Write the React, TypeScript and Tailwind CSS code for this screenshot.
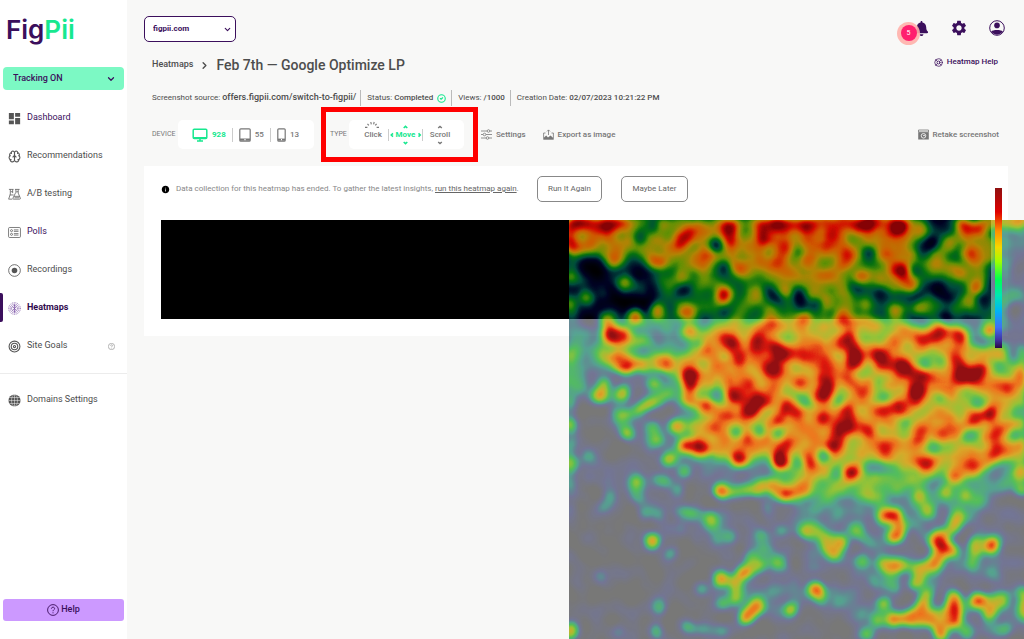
import type { ReactNode } from "react";
import { FaBell } from "react-icons/fa";
import { MdDashboard, MdSettings, MdInfo } from "react-icons/md";
import { LuBrain, LuTarget, LuLifeBuoy, LuCircleCheck, LuChevronDown, LuChevronRight } from "react-icons/lu";

type Layer = { level: number; width: number; d: string; fill?: boolean };

// movement density, painted from cold to hot and coloured by the filter in HeatCanvas
const layers: Layer[] = [
    { level: 0.09, width: 24, d: "M20 170H100M60 200L150 250 210 260M70 270L100 300 150 300 190 320M230 300L300 310 340 290 440 290M240 340L300 350 340 340M380 350L450 350M230 380L300 375M290 400L450 395M150 380L220 370M210 330L215 410M300 270L310 320M20 250L50 260M420 300L425 340" },
    { level: 0.23, width: 6, fill: true, d: "M0 0H455V262L400 285 330 292 230 290 205 255 110 240 112 205 100 150 60 148 30 152 10 170 0 180Z" },
    { level: 0.24, width: 9, d: "M2 60V290M45 190L56 213M65 262L70 280M82 208L80 230M85 258L98 262M130 290L141 301 146 320M113 295V310M199 285L201 300M170 270L190 270M200 330L215 345M165 360L190 380M190 375L215 370M380 310L395 285M315 270L300 260M290 315L310 330 325 365M340 300L360 320M400 330L405 345M305 370L330 360M395 300L410 275M420 350L432 355M400 385L455 370M385 410L440 408M290 400L300 385M265 300L275 290M370 350L360 372M340 240L350 265M130 410L150 411" },
    { level: 0.36, width: 6, fill: true, d: "M78 58L130 55 225 65 225 95 150 98 90 60ZM345 40L410 50 410 90 345 90Z" },
    { level: 0.44, width: 6, fill: true, d: "M227 245L400 245 345 262 305 280 250 270 227 282Z" },
    { level: 0.56, width: 6, fill: true, d: "M0 0H352L338 40 350 60 330 70 300 55 280 62 255 95 235 80 215 70 190 55 170 45 130 50 85 42 55 42 45 44 30 34 0 28Z" },
    { level: 0.6, width: 6, fill: true, d: "M130 112L160 105 230 104 300 100 345 108 395 112 420 125 455 130V238L420 242 395 260 345 245 305 255 270 246 250 262 232 262 222 232 150 236 125 215 135 190 118 180 122 125Z" },
    { level: 0.54, width: 15, d: "M365 40L385 20M395 5L410 60M418 0H455M418 20L420 35M60 140L100 144M58 120L75 125M30 130L50 145M190 150L150 180M370 50L400 55M380 245L395 265M145 165L150 100M195 265H225M228 270H240M110 60L115 90M180 60L200 90M280 88L270 70" },
    { level: 0.06, width: 8, fill: true, d: "M12 42L30 38 38 48 52 48 72 40 82 65 80 94 12 96 6 70Z" },
    { level: 0.2, width: 11, d: "M20 45L12 60M40 90L45 98M60 62L75 75M18 95V130M45 60L55 70M30 62L34 72M45 48L70 42" },
    { level: 0.03, width: 14, d: "M20 52L30 54M55 85H72M22 154h0M28 192L35 198M20 102h0M447 33L448 60M448 88L444 135M230 75L232 80M247 84h0M362 22h0M368 70L380 78M412 78h0M147 26h0M376 97h0" },
    { level: 0.12, width: 13, d: "M156 47h0M110 74L118 66M155 94h0M105 114h0M75 130h0M232 29h0M300 33h0M285 66h0M310 75h0M345 50h0M362 3h0M345 80L355 70M440 118h0M198 70L210 78M135 253L200 252M395 118L415 122M356 145h0M376 145h0M244 181h0M232 182h0M305 163h0M338 177h0M255 236h0M147 175h0M168 212h0M190 211h0M85 5h0M70 18h0" },
    { level: 0.2, width: 12, d: "M371 178h0M406 182L410 185M337 202h0M401 215L395 222M365 228h0M300 248H325M268 253h0M450 190L447 195M447 215h0M209 178h0M210 213h0M431 146h0M125 145h0M158 140h0M230 243h0M315 177h0M130 125h0M270 182h0M45 130h0M85 178h0" },
    { level: 0.38, width: 12, d: "M8 167h0M42 277L36 286M75 295h0M70 277h0M95 259h0M110 271h0M113 293L125 294M213 310h0M192 314h0M154 383h0M118 407h0M50 411h0M152 411h0M327 367h0M435 410h0M412 280h0M397 268h0M260 278h0M18 235h0M133 175h0M90 296h0M101 334h0M30 358h0M88 383L90 388M133 370h0M147 320h0M161 318h0M303 361h0M270 383h0M208 343L195 330M0 130V180" },
    { level: 0.6, width: 13, d: "M0 58h0M0 85h0M55 62h0M18 77h0M36 165L30 176M86 163h0M56 196h0M58 213h0M82 208h0M87 219h0M125 208h0M115 250h0M69 261h0M141 299L142 303M182 337L190 345M208 342h0M165 362L168 377M222 390h0M87 411h0M287 309h0M255 318L264 335M349 276h0M360 290h0M378 272h0M383 310L390 295M350 360L345 363M250 378h0M405 345h0M407 322V332M292 340h0M315 384h0M308 399h0M358 375L352 388M415 380L435 380M423 388L420 395M455 375V395M397 412h0M297 414h0M1 205h0M452 270h0M395 275h0M38 100h0M115 58h0M186 70h0M130 40L110 45M399 80h0M350 4L352 10M380 25h0M295 85h0M266 72L272 90" },
    { level: 0.58, width: 10, d: "M68 190L100 174M160 271H190M192 345L174 352M316 345L340 347M370 340L350 352" },
    { level: 0.74, width: 15, d: "M53 174h0M31 176h0M2 244h0M108 207h0M143 208h0M100 240h0M83 321h0M174 353h0M168 376h0M189 385L178 397M243 311L238 312M262 323H271M326 316L330 308M384 330h0M371 335L363 347 350 352M316 345L330 344M325 398h0M340 398L373 397M373 400L372 413M452 254h0M235 269h0M400 247h0M245 310h0M315 296h0M25 18h0M45 40L36 15M88 41h0M97 5h0M130 31L142 38M170 48L172 28 163 15M210 38L216 68M75 144L97 143M66 97h0M89 92h0M120 112h0M330 15L340 32M240 42L253 53M278 42h0M292 57h0M274 25L278 45M318 35L342 65M407 66h0M353 88h0M410 36L399 34M257 3L260 15M325 92h0M420 110h0M115 142L120 160M140 140L150 150M205 20L218 30M230 20L255 18 262 30M240 30L235 22" },
    { level: 0.74, width: 14, d: "M222 15L270 12M190 8L225 15M120 18L100 25M235 160L260 190 290 200 320 190 350 170M265 225L250 200 220 215M340 225L310 230M160 160L200 165 225 185M180 190V220M200 225L230 230M395 230L450 228M360 165L395 158 440 165M280 130L260 120 240 140M195 120L230 140M383 205L400 200M320 120L340 140M386 112L350 118M160 225H230M150 130L120 140M300 160L290 180M430 210L400 235M140 155L170 140M210 150L235 130M300 130L310 150M375 150L400 135" },
    { level: 0.84, width: 15, d: "M121 178h0M138 188h0M152 271h0M152 359h0M161 225h0M197 223h0M213 225h0M235 100h0M272 100h0M355 120L370 110M388 140h0M232 166h0M352 212h0M376 167h0M375 215h0M340 225L352 224M240 235L243 243M387 255h0M385 378L384 400M326 398h0M263 330h0M2 411h0M286 249L280 252M395 6V14M411 8h0M399 34h0M448 3h0M210 40h0M57 144L50 138M180 218h0M209 199h0M280 190L270 205M314 225h0M227 223h0M368 193h0M383 205h0M246 120L240 125M351 397h0" },
    { level: 0.95, width: 15, d: "M8 3H50M2 5V26M113 21L120 16M160 6L163 20M195 5H227M200 5L197 18M228 5H262M270 3L325 2M274 28h0M318 18h0M119 92h0M155 76h0M203 106h0M57 146h0M118 226L135 228M199 183h0M209 271L216 274M326 296h0M422 325h0M246 369h0M281 161h0M302 209h0M350 160L345 183M407 198h0M421 196h0M408 380h0M286 250h0M212 240h0M218 188L226 193M195 130L215 132M280 190h0M265 225L278 210M260 199h0M332 189h0M390 117V125M449 158h0M441 170h0M425 232h0M232 7h0" },
    { level: 1, width: 18, d: "M42 114L52 117M121 160V164M156 195h0M165 175L183 172 182 188M171 239h0M158 120L168 130M188 124h0M193 143L200 147M122 156h0M329 50h0M329 6h0M259 143h0M280 122L285 142M312 137L330 145M335 155L352 158M350 158V168M395 157L410 152M253 163L257 175M258 200L265 203M333 189h0M355 242h0M371 318V323M371 320h0M212 241h0" },
];

function HeatCanvas() {
    return (
        <svg className="absolute left-[408px] top-0 h-[419px] w-[455px]" viewBox="0 0 455 419" role="img" aria-label="Move heatmap">
            <defs>
                <filter id="heat" filterUnits="userSpaceOnUse" x="0" y="0" width="455" height="419" colorInterpolationFilters="sRGB">
                    <feGaussianBlur in="SourceGraphic" stdDeviation="4" result="soft" />
                    <feTurbulence type="fractalNoise" baseFrequency="0.055" numOctaves="1" seed="7" />
                    <feColorMatrix type="matrix" values="1 0 0 0 0  1 0 0 0 0  1 0 0 0 0  0 0 0 0 1" result="grain" />
                    <feComposite in="soft" in2="grain" operator="arithmetic" k1="0.5" k2="0.72" k3="0.3" k4="-0.13" result="mixed" />
                    <feColorMatrix in="mixed" type="matrix" values="1 0 0 0 0  1 0 0 0 0  1 0 0 0 0  0 0 0 0 1" result="density" />
                    <feComponentTransfer in="density" result="colour">
                        <feFuncR type="table" tableValues="0 0 0 0.03 0.49 0.82 0.92 0.87 0.55" />
                        <feFuncG type="table" tableValues="0 0.02 0.45 0.64 0.71 0.61 0.4 0.05 0.01" />
                        <feFuncB type="table" tableValues="0 0.26 0.36 0.09 0.02 0.02 0 0 0.02" />
                    </feComponentTransfer>
                    <feColorMatrix in="density" type="matrix" values="0 0 0 0 0  0 0 0 0 0  0 0 0 0 0  1 0 0 0 0" />
                    <feComponentTransfer result="mask">
                        <feFuncA type="table" tableValues="0.52 0.54 0.66 0.69 0.8 0.85 0.88 0.95 0.95" />
                    </feComponentTransfer>
                    <feComposite in="colour" in2="mask" operator="in" />
                </filter>
            </defs>
            <g filter="url(#heat)">
                <rect x="-20" y="-20" width="495" height="459" fill="#000" />
                {layers.map((l, i) => {
                    const v = Math.round(l.level * 255);
                    const shade = `rgb(${v},${v},${v})`;
                    return (
                        <path key={i} d={l.d} fill={l.fill ? shade : "none"} stroke={shade} strokeWidth={l.width} strokeLinecap="round" strokeLinejoin="round" />
                    );
                })}
            </g>
        </svg>
    );
}

function FlaskIcon() {
    return (
        <svg viewBox="0 0 14 14" className="size-[13px]" fill="none" stroke="currentColor" strokeWidth="0.8">
            <path d="M1 1.5h5M2.5 1.5v5L.7 12h4M5 1.5v4M7.5 1.5h5M8.5 1.5v4M11 1.5v4l2.3 5.5c.2.6-.1 1-.7 1H6c-.6 0-.9-.4-.7-1L8 5.5M2 7.5h4M6.5 9h6" />
            <path d="M3 4h2M9 4h2M7 10.5h5" />
        </svg>
    );
}

function PollIcon() {
    return (
        <svg viewBox="0 0 14 14" className="size-[13px]" fill="none" stroke="currentColor" strokeWidth="0.8">
            <rect x="0.6" y="1.6" width="12.8" height="10.8" rx="1.2" />
            <circle cx="3.8" cy="5" r="1.1" />
            <circle cx="3.8" cy="9" r="1.1" />
            <path d="M6.3 4.2h5M6.3 5.8h5M6.3 8.2h5M6.3 9.8h5" />
        </svg>
    );
}

function RecordIcon() {
    return (
        <svg viewBox="0 0 14 14" className="size-[13px]">
            <circle cx="7" cy="7" r="6.3" fill="none" stroke="currentColor" strokeWidth="0.9" />
            <circle cx="7" cy="7" r="3" fill="currentColor" />
        </svg>
    );
}

function HeatIcon() {
    return (
        <svg viewBox="0 0 14 14" className="size-[13px]" fill="none" stroke="#7a4fa3" strokeLinecap="round">
            <circle cx="7" cy="7" r="6.3" strokeWidth="0.8" strokeDasharray="0.2 1.7" />
            <circle cx="7" cy="7" r="4.7" strokeWidth="0.9" strokeDasharray="0.3 1.5" />
            <circle cx="7" cy="7" r="3.1" strokeWidth="0.9" strokeDasharray="0.5 1.2" />
            <path d="M7 3v8M5.4 5.5L7 7l1.6-1.5M5.4 8.5L7 7l1.6 1.5" strokeWidth="0.8" />
        </svg>
    );
}

function GlobeIcon() {
    return (
        <svg viewBox="0 0 14 14" className="size-[13px]">
            <circle cx="7" cy="7" r="6.5" fill="currentColor" />
            <path d="M7 .5v13M.5 7h13M1.5 3.8h11M1.5 10.2h11" stroke="#fff" strokeWidth="0.5" />
            <ellipse cx="7" cy="7" rx="3.2" ry="6.5" fill="none" stroke="#fff" strokeWidth="0.5" />
        </svg>
    );
}

function DesktopIcon() {
    return (
        <svg viewBox="0 0 16 14" className="h-[14px] w-[16px]" fill="none" stroke="currentColor" strokeWidth="1.5">
            <rect x="1.2" y="1.2" width="13.6" height="9.3" rx="1" />
            <path d="M1 9.7h14M8 10.5V13M5 13h6" />
        </svg>
    );
}

function TabletIcon() {
    return (
        <svg viewBox="0 0 12 14" className="h-[14px] w-[12px]" fill="none" stroke="currentColor" strokeWidth="1.2">
            <rect x="0.8" y="0.8" width="10.4" height="12.4" rx="1" />
            <path d="M1 11.6h10" strokeWidth="2.2" />
            <path d="M5.4 11.6h1.2" stroke="#fff" />
        </svg>
    );
}

function PhoneIcon() {
    return (
        <svg viewBox="0 0 9 14" className="h-[14px] w-[9px]" fill="none" stroke="currentColor" strokeWidth="1.2">
            <rect x="0.8" y="0.8" width="7.4" height="12.4" rx="1" />
            <path d="M1 11.6h7" strokeWidth="2" />
            <path d="M4 11.6h1" stroke="#fff" />
        </svg>
    );
}

function SlidersIcon() {
    return (
        <svg viewBox="0 0 11 11" className="size-[11px]" fill="none" stroke="currentColor" strokeWidth="0.8">
            <path d="M0 2h6M9 2h2M0 5.5h2M5 5.5h6M0 9h5M8 9h3" />
            <circle cx="7.5" cy="2" r="1.3" />
            <circle cx="3.5" cy="5.5" r="1.3" />
            <circle cx="6.5" cy="9" r="1.3" />
        </svg>
    );
}

function ExportIcon() {
    return (
        <svg viewBox="0 0 11 11" className="size-[11px]" fill="none" stroke="currentColor" strokeWidth="0.8">
            <path d="M2.5 4H.6v6.4h9.8V4H8.5M5.5 6V1M4 2.4L5.5.9 7 2.4" />
            <path d="M1 10V8.6l2.2-2 1.8 2L7.5 6.4 10 8.8V10z" fill="currentColor" stroke="none" />
        </svg>
    );
}

function CameraIcon() {
    return (
        <svg viewBox="0 0 11 11" className="size-[11px]">
            <path d="M.5 1h10v2H.5z" fill="none" stroke="currentColor" strokeWidth="0.8" />
            <path d="M.2 3.2h10.6v7.3H.2z" fill="currentColor" />
            <circle cx="5.5" cy="6.8" r="2.3" fill="none" stroke="#fff" strokeWidth="0.8" />
            <circle cx="6" cy="6.5" r="0.8" fill="#fff" />
        </svg>
    );
}

function UserIcon() {
    return (
        <svg viewBox="0 0 16 16" className="size-[16px]">
            <circle cx="8" cy="8" r="7.3" fill="none" stroke="currentColor" strokeWidth="1" />
            <circle cx="8" cy="5.4" r="2.8" fill="currentColor" />
            <path d="M2.2 11.6C3.8 9.6 12.2 9.6 13.8 11.6A7 7 0 0 1 2.2 11.6z" fill="currentColor" />
        </svg>
    );
}

function QuestionIcon({ className }: { className: string }) {
    return (
        <svg viewBox="0 0 12 12" className={className} fill="none" stroke="currentColor" strokeWidth="0.9">
            <circle cx="6" cy="6" r="5.4" />
            <path d="M4.4 4.7C4.4 2.6 7.6 2.7 7.6 4.6 7.6 5.8 6 5.9 6 7.2M6 8.3v1" />
        </svg>
    );
}

function NavItem({ icon, name, tone, hint }: { icon: ReactNode; name: string; tone: string; hint?: boolean }) {
    return (
        <a href="#" className="flex h-[38px] items-center gap-[6px] pl-2">
            <span className="flex w-[13px] justify-center text-[#555]">{icon}</span>
            <span className={tone}>{name}</span>
            {hint && <QuestionIcon className="mr-3 ml-auto size-[7px] text-[#777]" />}
        </a>
    );
}

function Sidebar() {
    return (
        <aside className="flex min-h-screen w-[127px] shrink-0 flex-col bg-white text-[9px] text-[#4d4d4d]">
            <div className="h-[67px] pt-[13px] pl-[6px] font-['Inter',sans-serif] text-[26px] leading-[34px] font-semibold text-[#3b0f5c]">
                Fig<span className="text-[#17e88f]">Pii</span>
            </div>
            <div className="relative mx-[3px] h-[23px]">
                <select aria-label="Tracking" className="block h-full w-full appearance-none rounded-[4px] bg-[#7cf9c4] pl-[10px] font-medium text-[#3b0f5c]">
                    <option>Tracking ON</option>
                </select>
                <LuChevronDown className="pointer-events-none absolute top-[7px] right-[8px] size-[10px] stroke-3 text-[#3b0f5c]" />
            </div>
            <nav className="mt-[9px] border-b border-[#ececec] pb-[8px]">
                <NavItem icon={<MdDashboard className="size-[15px] shrink-0" />} name="Dashboard" tone="text-[#3b0f5c]" />
                <NavItem icon={<LuBrain className="size-[13px]" />} name="Recommendations" tone="" />
                <NavItem icon={<FlaskIcon />} name="A/B testing" tone="" />
                <NavItem icon={<PollIcon />} name="Polls" tone="text-[#3b0f5c]" />
                <NavItem icon={<RecordIcon />} name="Recordings" tone="" />
                <div className="relative">
                    <span className="absolute top-[4px] left-0 h-[29px] w-[3px] rounded-r-xs bg-[#3b0f5c]" />
                    <NavItem icon={<HeatIcon />} name="Heatmaps" tone="font-bold text-[#2f0a4d]" />
                </div>
                <NavItem icon={<LuTarget className="size-[13px]" />} name="Site Goals" tone="" hint />
            </nav>
            <div className="mt-[7px]">
                <NavItem icon={<GlobeIcon />} name="Domains Settings" tone="" />
            </div>
            <button className="mx-[3px] mt-auto mb-[18px] flex h-[22px] items-center justify-center gap-[2px] rounded-[3px] bg-[#cc99ff] font-medium text-[#3b0f5c]">
                <QuestionIcon className="size-[12px]" />
                Help
            </button>
        </aside>
    );
}

function TopBar() {
    return (
        <header className="flex h-[42px] items-start justify-between pt-[16px] pr-[3px] text-[#3b0f5c]">
            <div className="relative">
                <select aria-label="Domain" className="block h-[26px] w-[92px] appearance-none rounded-[5px] border border-[#3b0f5c] bg-white pl-2 text-[8px] font-bold">
                    <option>figpii.com</option>
                </select>
                <LuChevronDown className="pointer-events-none absolute top-[9px] right-[4px] size-[9px] stroke-3" />
            </div>
            <div className="flex items-center gap-[21px] pt-[3px]">
                <button aria-label="Notifications" className="relative">
                    <FaBell className="size-[15px]" />
                    <span className="absolute top-[1px] -left-[17px] flex size-[23px] items-center justify-center rounded-full bg-[#ffb0aa]/90">
                        <span className="flex size-[16px] items-center justify-center rounded-full bg-[#ff1f6e] text-[7px] text-white">5</span>
                    </span>
                </button>
                <button aria-label="Settings"><MdSettings className="size-[18px]" /></button>
                <button aria-label="Account"><UserIcon /></button>
            </div>
        </header>
    );
}

function Toolbar() {
    return (
        <div className="flex h-[29px] items-center pl-2 text-[8px] font-medium text-[#777]">
            <span className="w-[26px] text-[7px] font-normal">DEVICE</span>
            <div className="flex h-full w-[136px] items-center rounded-[5px] bg-white pl-[14px]">
                <button className="flex items-center gap-1 font-bold text-[#17e88f]"><DesktopIcon />928</button>
                <button className="ml-[6px] flex items-center gap-1 border-l border-[#ccc] pl-[6px]"><TabletIcon />55</button>
                <button className="ml-[6px] flex items-center gap-1 border-l border-[#ccc] pl-[6px]"><PhoneIcon />13</button>
            </div>
            <div className="relative ml-[16px] flex h-full items-center">
                <span className="w-[19px] text-[7px] font-normal">TYPE</span>
                <div className="flex h-full w-[115px] items-center rounded-[5px] bg-white">
                    <button className="relative ml-[14px] w-[20px]">
                        <svg viewBox="0 0 16 8" className="absolute -top-[8px] left-[1px] h-[8px] w-[16px]" fill="none" stroke="currentColor" strokeWidth="1.1">
                            <path d="M1 6.4h2.4M12.6 6.4H15M3.5 2.8l1.3 1.6M6.8 1l.5 2.3M10.2 1l-.6 2.3M12.6 2.8l-1.3 1.6" />
                        </svg>
                        Click
                    </button>
                    <button className="relative ml-[5px] w-[35px] border-x border-[#ccc] text-center font-bold text-[#17e88f]">
                        <svg viewBox="0 0 33 20" className="absolute -top-[4px] left-0 h-[20px] w-[33px]" fill="none" stroke="currentColor" strokeWidth="1.6">
                            <path d="M4 8.4L2.3 10 4 11.6M29.5 8.4l1.7 1.6-1.7 1.6M14.7 3l1.8-1.6L18.3 3M14.7 17l1.8 1.6 1.8-1.6" />
                        </svg>
                        Move
                    </button>
                    <button className="relative ml-[5px] w-[24px]">
                        <svg viewBox="0 0 24 20" className="absolute -top-[4px] left-0 h-[20px] w-[24px]" fill="none" stroke="currentColor" strokeWidth="1.4">
                            <path d="M10.2 3L12 1.4 13.8 3M10.2 17l1.8 1.6 1.8-1.6" />
                        </svg>
                        Scroll
                    </button>
                </div>
                <span className="pointer-events-none absolute -top-[13px] -right-[14px] -bottom-[13px] -left-[9px] border-5 border-[#ff0000]" />
            </div>
            <button className="ml-[17px] flex items-center gap-1"><SlidersIcon />Settings</button>
            <button className="ml-[17px] flex items-center gap-1"><ExportIcon />Export as image</button>
            <button className="mr-[9px] ml-auto flex items-center gap-1"><CameraIcon />Retake screenshot</button>
        </div>
    );
}

function Report() {
    return (
        <section className="relative mt-[17px] bg-white px-[17px] pt-[10px] pb-[17px]">
            <div className="flex h-[26px] items-center text-[8px]">
                <MdInfo className="size-[9px] text-black" />
                <p className="ml-[6px] w-[350px] text-[#888]">
                    Data collection for this heatmap has ended. To gather the latest insights, <a href="#" className="text-[#666] underline">run this heatmap again</a>.
                </p>
                <button className="ml-[11px] h-full w-[65px] rounded-[5px] border border-[#888] text-[#666]">Run It Again</button>
                <button className="ml-[19px] h-full w-[67px] rounded-[5px] border border-[#888] text-[#666]">Maybe Later</button>
            </div>
            <div className="relative mt-[18px] h-[99px] bg-black">
                <HeatCanvas />
            </div>
            <div className="absolute top-[22px] right-[6px] h-[160px] w-[7px] bg-[linear-gradient(to_bottom,#8e1010,#e00000_15%,#ff9000_27%,#f5d800_37%,#a0ff00_46%,#00ff50_57%,#00e8b0_67%,#00b4f5_77%,#4070f5_87%,#4030a0_95%,#2a0845)]" />
        </section>
    );
}

export default function App() {
    return (
        <div className="flex min-h-screen overflow-hidden bg-[#f8f8f7] font-['Roboto',sans-serif]">
            <Sidebar />
            <main className="min-w-0 flex-1 px-[16px] pl-[17px]">
                <TopBar />
                <div className="mt-[12px] flex h-[22px] items-center pl-2 text-[#4d4d4d]">
                    <a href="#" className="text-[9px] font-medium">Heatmaps</a>
                    <LuChevronRight className="mx-[6px] size-[11px] stroke-3" />
                    <h1 className="text-[14px] font-medium">Feb 7th — Google Optimize LP</h1>
                    <a href="#" className="mr-[10px] ml-auto flex items-center gap-1 self-start pt-[2px] text-[8px] font-medium text-[#3b0f5c]">
                        <LuLifeBuoy className="size-[9px] stroke-2" />
                        Heatmap Help
                    </a>
                </div>
                <div className="mt-[14px] mb-[14px] flex h-[16px] items-center pl-2 text-[8px] text-[#4d4d4d]">
                    <p>Screenshot source: <span className="text-[9px] font-medium">offers.figpii.com/switch-to-figpii/</span></p>
                    <p className="ml-[4px] flex h-full items-center gap-[2px] border-l border-[#bbb] pl-[6px]">
                        Status: <span className="font-medium">Completed</span>
                        <LuCircleCheck className="ml-[2px] size-[9px] stroke-3 text-[#17e88f]" />
                    </p>
                    <p className="ml-[5px] flex h-full items-center gap-[2px] border-l border-[#bbb] pl-[6px]">
                        Views: <span className="font-medium">/1000</span>
                    </p>
                    <p className="ml-[5px] flex h-full items-center gap-[2px] border-l border-[#bbb] pl-[6px]">
                        Creation Date: <span className="font-medium">02/07/2023 10:21:22 PM</span>
                    </p>
                </div>
                <Toolbar />
                <Report />
            </main>
        </div>
    );
}
